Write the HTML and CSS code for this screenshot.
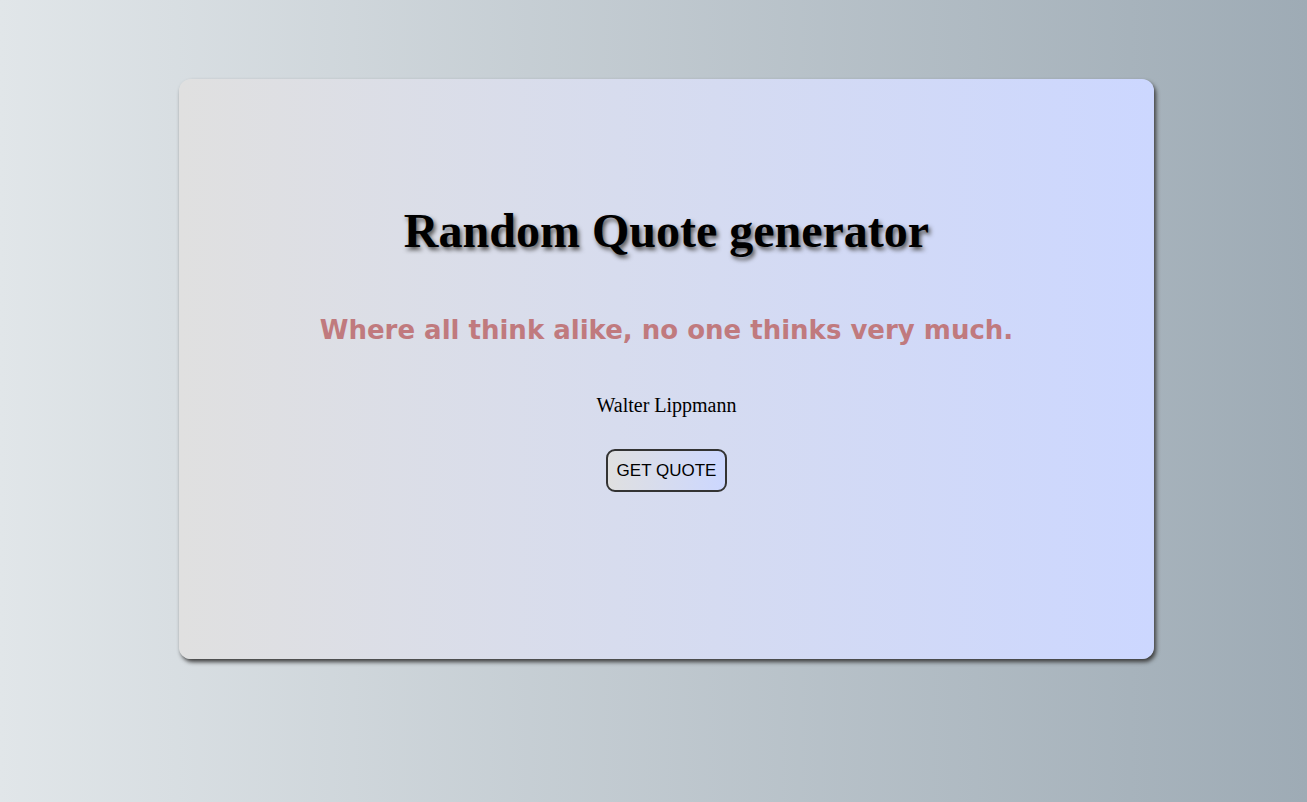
FILE: index.html
```html
<!DOCTYPE html>
<html lang="en">
<head>
<meta charset="utf-8">
<title>Random Quote generator</title>
<link rel="stylesheet" href="styles.css">
</head>
<body>
<div class="page">
  <main class="card">
    <h1 class="title">Random Quote generator</h1>
    <p class="quote">Where all think alike, no one thinks very much.</p>
    <p class="author">Walter Lippmann</p>
    <button class="btn" type="button">GET QUOTE</button>
  </main>
</div>
</body>
</html>
```
FILE: styles.css
```css
html, body {
  margin: 0;
  height: 100%;
}
body {
  background: linear-gradient(to right, #e1e6e9, #9eabb5);
  font-family: "Liberation Serif", "Times New Roman", serif;
}
.page {
  display: flex;
  justify-content: center;
  padding: 79px 0 0 26px;
}
.card {
  width: 975px;
  height: 580px;
  box-sizing: border-box;
  border-radius: 12px;
  background: linear-gradient(to right, #e0e0e0, #ccd7ff);
  box-shadow: 2px 3px 4px #3c3c3c;
  display: flex;
  flex-direction: column;
  align-items: center;
  padding-top: 125px;
}
.title {
  margin: 0;
  font-family: "Liberation Serif", "Times New Roman", serif;
  font-weight: bold;
  font-size: 48px;
  line-height: 54px;
  color: #000;
  text-shadow: 2px 3px 4px #555;
}
.quote {
  margin: 54px 0 0;
  font-family: "Comic Sans MS", "DejaVu Sans", sans-serif;
  font-weight: bold;
  font-size: 26px;
  line-height: 36px;
  color: #c07a7e;
}
.author {
  margin: 45px 0 0;
  font-size: 20px;
  line-height: 24px;
  color: #000;
}
.btn {
  margin-top: 32px;
  width: 121px;
  height: 43px;
  border: 2px solid #333;
  border-radius: 9px;
  background: linear-gradient(to right, #e0e0e0, #ccd7ff);
  font-family: "Liberation Sans", Arial, sans-serif;
  font-size: 17px;
  color: #000;
  padding: 0;
  cursor: pointer;
}
```
